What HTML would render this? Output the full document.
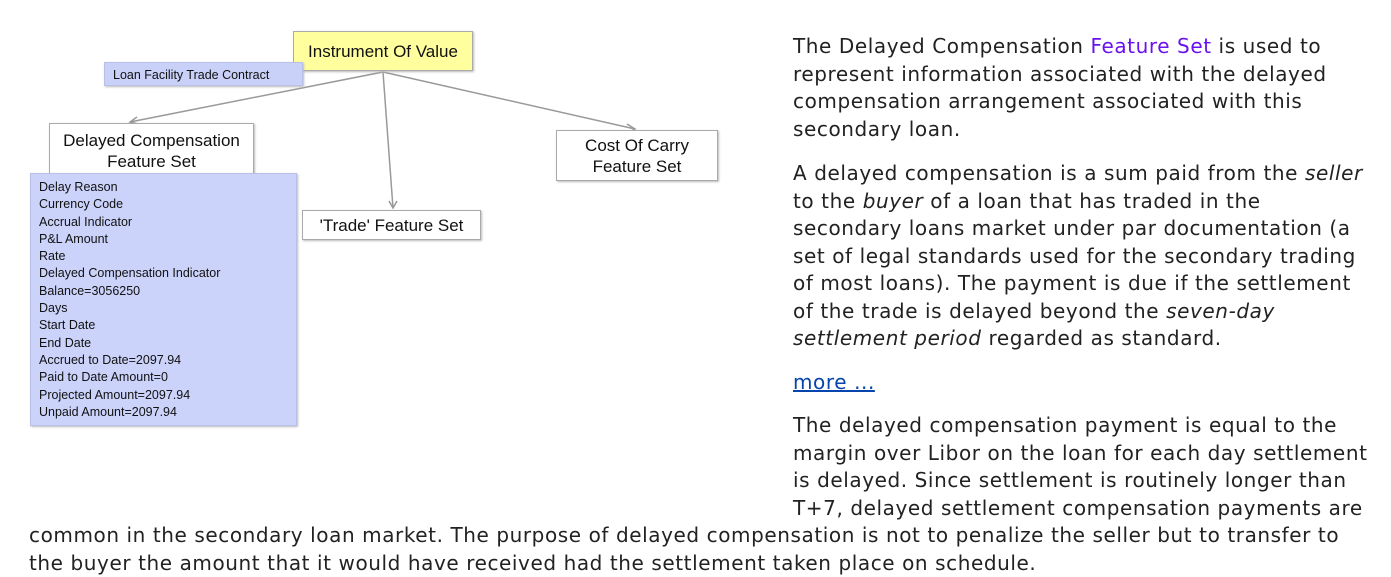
<!DOCTYPE html>
<html><head><meta charset="utf-8"><style>
body{margin:0;width:1391px;height:574px;background:#fff;position:relative;overflow:hidden;font-family:"DejaVu Sans","Liberation Sans",sans-serif;color:#222}
.l{position:absolute;white-space:nowrap;font-size:20px;letter-spacing:0.58px;line-height:27.5px}
.d{position:absolute;box-sizing:border-box;font-family:"Liberation Sans",sans-serif;color:#111;box-shadow:1px 1px 2px #bbb}
.lst div{font-size:12.5px;line-height:17.3px}
a{color:#6a11f0;text-decoration:none}
.m{color:#0645ad;text-decoration:underline}
</style></head><body>
<svg style="position:absolute;left:0;top:0" width="760" height="440">
<g stroke="#999" stroke-width="1.5" fill="none">
<line x1="383" y1="72" x2="130" y2="122"/>
<polyline points="137,117 130,122 138,124"/>
<line x1="383" y1="72" x2="393" y2="208"/>
<polyline points="389,201 393,208 397,201"/>
<line x1="383" y1="72" x2="635" y2="129"/>
<polyline points="627,124 635,129 628,133"/>
</g></svg>
<div class="d" style="left:293px;top:31px;width:180px;height:40px;background:#ffff9e;border:1px solid #aaa;font-size:17px;line-height:40px;text-align:center">Instrument Of Value</div>
<div class="d" style="left:104px;top:62px;width:199px;height:24px;background:#c9d1f8;border:1px solid #b8c0e8;font-size:12.5px;line-height:24px;padding-left:8px">Loan Facility Trade Contract</div>
<div class="d" style="left:49px;top:123px;width:205px;height:54px;background:#fff;border:1px solid #aaa;font-size:17px;line-height:21px;text-align:center;padding-top:6px">Delayed Compensation<br>Feature Set</div>
<div class="d" style="left:556px;top:130px;width:162px;height:51px;background:#fff;border:1px solid #aaa;font-size:17px;line-height:21px;text-align:center;padding-top:4px">Cost Of Carry<br>Feature Set</div>
<div class="d" style="left:302px;top:210px;width:179px;height:30px;background:#fff;border:1px solid #aaa;font-size:17px;line-height:29px;text-align:center">'Trade' Feature Set</div>
<div class="d lst" style="left:30px;top:173px;width:267px;height:253px;background:#cbd3fb;border:1px solid #b8c0e8;padding:5px 0 0 8px">
<div>Delay Reason</div><div>Currency Code</div><div>Accrual Indicator</div><div>P&amp;L Amount</div><div>Rate</div><div>Delayed Compensation Indicator</div><div>Balance=3056250</div><div>Days</div><div>Start Date</div><div>End Date</div><div>Accrued to Date=2097.94</div><div>Paid to Date Amount=0</div><div>Projected Amount=2097.94</div><div>Unpaid Amount=2097.94</div></div>
<div class="l" style="left:793px;top:33px">The Delayed Compensation <a>Feature Set</a> is used to<br>represent information associated with the delayed<br>compensation arrangement associated with this<br>secondary loan.</div>
<div class="l" style="left:793px;top:160px">A delayed compensation is a sum paid from the <i>seller</i><br>to the <i>buyer</i> of a loan that has traded in the<br>secondary loans market under par documentation (a<br>set of legal standards used for the secondary trading<br>of most loans). The payment is due if the settlement<br>of the trade is delayed beyond the <i>seven-day</i><br><i>settlement period</i> regarded as standard.</div>
<div class="l" style="left:793px;top:369px"><span class="m">more ...</span></div>
<div class="l" style="left:793px;top:412px">The delayed compensation payment is equal to the<br>margin over Libor on the loan for each day settlement<br>is delayed. Since settlement is routinely longer than<br>T+7, delayed settlement compensation payments are</div>
<div class="l" style="left:29px;top:522px">common in the secondary loan market. The purpose of delayed compensation is not to penalize the seller but to transfer to<br>the buyer the amount that it would have received had the settlement taken place on schedule.</div>
</body></html>
